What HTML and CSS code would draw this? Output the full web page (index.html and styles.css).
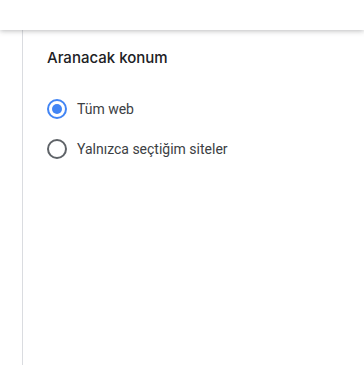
FILE: index.html
```html
<!DOCTYPE html>
<html lang="tr">
<head>
  <meta charset="UTF-8">
  <title>Aranacak konum</title>
  <link rel="stylesheet" href="styles.css">
</head>
<body>
  <div class="topbar"></div>
  <div class="page">
    <div class="sidebar"></div>
    <div class="content">
      <h2 class="title">Aranacak konum</h2>
      <label class="option">
        <span class="radio checked"></span>
        <span>Tüm web</span>
      </label>
      <label class="option">
        <span class="radio"></span>
        <span>Yalnızca seçtiğim siteler</span>
      </label>
    </div>
  </div>
</body>
</html>
```

FILE: styles.css
```css
body {
  margin: 0;
  font-family: Roboto, Arial, sans-serif;
  background: #fff;
  height: 365px;
  overflow: hidden;
}

.topbar {
  height: 30px;
  background: #fff;
  box-shadow: 0 1px 5px rgba(60, 64, 67, 0.35);
  position: relative;
  z-index: 1;
}

.page {
  display: flex;
  height: 335px;
}

.sidebar {
  width: 22px;
  border-right: 1px solid #dadce0;
}

.content {
  padding: 17px 0 0 24px;
}

.title {
  margin: 0 0 20px;
  font-family: Inter, Roboto, sans-serif;
  font-size: 15px;
  font-weight: 500;
  color: #202124;
  line-height: 22px;
}

.option {
  display: flex;
  align-items: center;
  gap: 10px;
  height: 40px;
  font-size: 14px;
  color: #3c4043;
}

.radio {
  width: 16px;
  height: 16px;
  border: 2px solid #5f6368;
  border-radius: 50%;
  display: flex;
  align-items: center;
  justify-content: center;
}

.radio.checked {
  border-color: #4285f4;
}

.radio.checked::after {
  content: "";
  width: 10px;
  height: 10px;
  border-radius: 50%;
  background: #4285f4;
}
```
